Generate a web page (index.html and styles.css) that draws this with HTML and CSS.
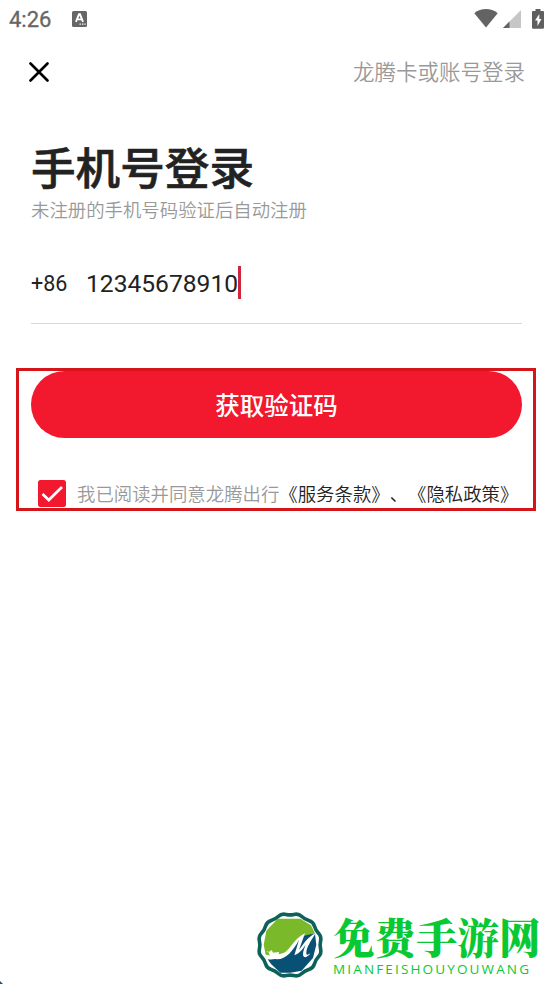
FILE: index.html
```
<!DOCTYPE html>
<html lang="zh-CN">
<head>
    <meta charset="UTF-8">
    <meta name="viewport" content="width=device-width, initial-scale=1.0">
    <title>手机号登录</title>
    <link rel="stylesheet" href="styles.css">
</head>
<body>

<div class="page">
    <div class="status-bar">
        <span class="time">4:26</span>
        <svg class="ime-icon" width="15" height="16" viewBox="0 0 15 16">
            <rect width="15" height="16" rx="1.5" fill="#666"/>
            <path d="M3.9 10.8L7 3.3h1l3 7.5M5.2 8.4h4.5" fill="none" stroke="#fff" stroke-width="1.9"/>
            <path d="M7.5 13.2h1.4M10 13.2h1.4M12.4 13.2h1.2" stroke="#fff" stroke-width="1.3"/>
        </svg>
        <div class="status-icons">
            <svg width="24" height="19" viewBox="0 0 24 19">
                <path d="M0.3 4.2C7-1.4 17-1.4 23.7 4.2L12 18.6z" fill="#636363"/>
            </svg>
            <svg class="signal" width="18" height="18" viewBox="0 0 18 18">
                <path d="M0 18L18 0v18z" fill="#c6c6c6"/>
                <path d="M0 18l6.5-6.5V18z" fill="#636363"/>
            </svg>
            <svg class="battery" width="12" height="20" viewBox="0 0 12 20">
                <path d="M3.5 0h5v2H11a1 1 0 0 1 1 1v15.5a1.2 1.2 0 0 1-1.2 1.2H1.2A1.2 1.2 0 0 1 0 18.5V3a1 1 0 0 1 1-1h2.5z" fill="#5f5f5f"/>
                <path d="M7.3 5L3 11.5h2.5V17l4-7H7.3z" fill="#fff"/>
            </svg>
        </div>
    </div>

    <div class="nav">
        <svg class="close" width="20" height="20" viewBox="0 0 20 20">
            <path d="M1.5 1.5l17 17M18.5 1.5l-17 17" stroke="#000" stroke-width="2.6" stroke-linecap="round"/>
        </svg>
        <span class="other-login">龙腾卡或账号登录</span>
    </div>

    <h1>手机号登录</h1>
    <p class="subtitle">未注册的手机号码验证后自动注册</p>

    <div class="phone">
        <span class="code">+86</span>
        <span class="number">12345678910</span>
        <span class="cursor"></span>
    </div>

    <div class="highlight">
        <button class="submit">获取验证码</button>
        <div class="agreement">
            <svg class="checkbox" width="28" height="27" viewBox="0 0 28 27">
                <rect width="28" height="27" rx="2.5" fill="#f2182d"/>
                <path d="M4.5 14l6.3 6L24 7" fill="none" stroke="#fff" stroke-width="2.7"/>
            </svg>
            <span class="terms">我已阅读并同意龙腾出行<b>《服务条款》、《隐私政策》</b></span>
        </div>
    </div>

    <div class="brand">
        <svg class="brand-logo" width="68" height="68" viewBox="-34 -34 68 68">
            <path d="M30.600 4Q31.700 8.500 28.500 11.800Q25.600 14.800 24.500 18.800Q23.200 23.200 18.800 24.500Q14.800 25.600 11.800 28.500Q8.500 31.700 4 30.600Q0 29.600 -4 30.600Q-8.500 31.700 -11.800 28.500Q-14.800 25.600 -18.800 24.500Q-23.200 23.200 -24.500 18.800Q-25.600 14.800 -28.500 11.800Q-31.700 8.500 -30.600 4Q-29.600 0 -30.600 -4Q-31.700 -8.500 -28.500 -11.800Q-25.600 -14.800 -24.500 -18.800Q-23.200 -23.200 -18.800 -24.500Q-14.800 -25.600 -11.800 -28.500Q-8.500 -31.700 -4 -30.600Q0 -29.600 4 -30.600Q8.500 -31.700 11.800 -28.500Q14.800 -25.600 18.800 -24.500Q23.200 -23.200 24.500 -18.800Q25.600 -14.800 28.500 -11.800Q31.700 -8.500 30.600 -4Q29.600 0 30.600 4z" fill="#fff" stroke="#0d6158" stroke-width="3.600"/>
            <g transform="scale(.333) translate(-115 -115)">
                <path d="M78 36h68l32 20 14 28-44 10-42 42-42 12-22-4-6-30 8-42z" fill="#7ab929"/>
                <path d="M48 158c40 6 60-22 84-54 16-16 36-22 58-22l4 32-10 40-34 38-34 6H86l-28-26z" fill="#095174"/>
                <path d="M42 134l10 2 8-6 4 8 18-2c-4 14 10 8 22-2 18-18 30-42 56-54l-18 50c16-22 28-40 50-50-14 22-28 44-28 58 0 8 4 8 12 2-8 14-22 16-22 2 0-8 4-18 8-28-12 18-20 26-34 32l14-46c-18 32-38 58-66 58-16-2-24-10-26-24z" fill="#fff"/>
            </g>
        </svg>
        <div class="brand-text">
            <div class="brand-name">免费手游网</div>
            <div class="brand-pinyin">MIANFEISHOUYOUWANG</div>
        </div>
    </div>
    <div class="corner"></div>
</div>

</body>
</html>
```
FILE: styles.css
```
* {
    box-sizing: border-box;
}
body {
    margin: 0;
    background-color: #fff;
    color: #222;
    font-family: Roboto, "Noto Sans CJK SC", sans-serif;
    text-spacing-trim: space-all;
}
svg {
    display: block;
    flex-shrink: 0;
}
.page {
    position: relative;
    display: flex;
    flex-direction: column;
    height: 984px;
    overflow: hidden;
}
.status-bar {
    display: flex;
    align-items: center;
    height: 37px;
    padding: 0 9px 0 9px;
    color: #666;
}
.time {
    width: 63px;
    margin-top: 1px;
    font-size: 22px;
    font-weight: 400;
    -webkit-text-stroke: 0.3px #666;
}
.status-icons {
    display: flex;
    align-items: center;
    margin-left: auto;
}
.signal {
    margin-left: 5px;
}
.battery {
    margin-left: 11px;
}
.nav {
    display: flex;
    align-items: center;
    justify-content: space-between;
    height: 69px;
    padding: 0 28px 0 29px;
}
.other-login {
    margin-top: -2px;
    color: #999;
    font-size: 21.5px;
    font-weight: 350;
}
h1 {
    margin: 36px 0 0 31px;
    font-size: 44.6px;
    line-height: 56px;
    font-weight: 500;
    -webkit-text-stroke: 0.6px #222;
}
.subtitle {
    margin: -1px 0 0 31px;
    color: #999;
    font-size: 18.4px;
    line-height: 28px;
    font-weight: 350;
}
.phone {
    display: flex;
    align-items: center;
    height: 82px;
    margin: 17px 31px 0;
    border-bottom: 1px solid #d8d8d8;
}
.code {
    width: 55px;
    margin-top: 2px;
    font-size: 21.5px;
}
.number {
    margin-top: 2px;
    font-size: 24.6px;
}
.cursor {
    width: 3px;
    height: 33px;
    background-color: #d0263c;
}
.highlight {
    height: 143px;
    margin: 44px 17px 0 16px;
    padding: 0 11px 0 12px;
    border: 3px solid #d4161b;
}
.submit {
    display: block;
    width: 100%;
    height: 67px;
    padding: 0;
    border: none;
    border-radius: 34px;
    background-color: #f2182d;
    color: #fff;
    font-family: inherit;
    font-size: 24.5px;
    font-weight: 500;
}
.agreement {
    display: flex;
    align-items: center;
    height: 27px;
    margin-top: 42px;
    padding-left: 7px;
}
.terms {
    margin: -2px 0 0 11px;
    color: #999;
    font-size: 18.4px;
    font-weight: 350;
    white-space: nowrap;
}
.terms b {
    color: #222;
    font-weight: 350;
}
.brand {
    display: flex;
    margin: auto 11px 5px auto;
    width: 286px;
}
.brand-text {
    margin-left: 9px;
    white-space: nowrap;
}
.brand-name {
    color: #08c934;
    font-family: "Noto Serif CJK SC", "Noto Sans CJK SC", serif;
    font-size: 41.5px;
    line-height: 50px;
    font-weight: 900;
}
.brand-pinyin {
    margin-top: 1px;
    color: #08c934;
    font-family: "Open Sans", sans-serif;
    font-size: 13.5px;
    line-height: 14px;
    font-weight: 500;
    letter-spacing: 2.15px;
}
.corner {
    position: absolute;
    left: 0;
    bottom: 0;
    width: 3px;
    height: 3px;
    background-color: #245273;
    clip-path: polygon(0 0, 100% 100%, 0 100%);
}
```
